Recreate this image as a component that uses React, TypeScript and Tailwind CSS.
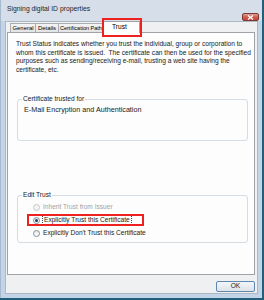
export default function App() {
  return (
    <div className="w-[264px] h-[300px] bg-[#215f7a] font-['Liberation_Sans',Arial,sans-serif] text-[6.6px] leading-[8.5px] text-black overflow-hidden">
      <div className="w-[262px] h-[298px] flex flex-col bg-[#c4d4e8] border-l border-[#a7b9cc]">
        {/* Title bar */}
        <div className="h-[21px] flex justify-between bg-[#d6dfe9] pl-[6px] pr-[3px]">
          <span className="pt-[5px] text-[#1e1e1e] text-[6.8px]">Signing digital ID properties</span>
          <div className="self-end w-[17px] h-[8px] rounded-[2px] border border-[#7b3a34] bg-gradient-to-b from-[#e3a196] via-[#cc5b4d] to-[#c4483a] flex items-center justify-center">
            <svg width="7" height="5" viewBox="0 0 7 5">
              <path d="M1 0.5 L6 4.5 M6 0.5 L1 4.5" stroke="#fff" strokeWidth="1.3" />
            </svg>
          </div>
        </div>

        {/* Client area */}
        <div className="flex-1 flex mx-[4px] mb-[4px]">
          <div className="w-[253px] flex flex-col bg-[#eff0f1] border border-[#aeb8c3] pl-[1px] pr-[2px]">
            {/* Tabs */}
            <div className="relative h-[10px] flex items-end pl-[3px] text-[5.9px]">
              <div className="h-[9px] w-[26px] border border-b-0 border-[#a9adb1] bg-gradient-to-b from-[#f4f4f4] to-[#e2e3e4] flex items-center justify-center">General</div>
              <div className="h-[9px] w-[23px] border border-l-0 border-b-0 border-[#a9adb1] bg-gradient-to-b from-[#f4f4f4] to-[#e2e3e4] flex items-center justify-center">Details</div>
              <div className="h-[9px] w-[46px] border border-l-0 border-b-0 border-[#a9adb1] bg-gradient-to-b from-[#f4f4f4] to-[#e2e3e4] flex items-center pl-[1px] whitespace-nowrap text-[5.5px]">Certification Path</div>
              <div className="relative z-10 -ml-[2px] -mb-[1px] h-[12px] w-[37px] border border-b-0 border-[#a0a4a8] bg-[#fcfdfc] flex items-start pl-[8px] pt-[1px] text-[6.6px]">Trust</div>
              {/* red highlight annotation */}
              <div className="absolute left-[95px] top-[-4px] w-[40px] h-[19px] border-2 border-[#ee2020] z-20" />
            </div>

            {/* Tab panel */}
            <div className="h-[243px] w-[248px] overflow-hidden flex flex-col bg-[#fcfdfc] border border-[#a0a4a8] pl-[8px] pr-[6px]">
              <div className="pt-[7px] whitespace-nowrap text-[6.6px] text-[#1a1a1a]">
                <div>Trust Status indicates whether you trust the individual, group or corporation to</div>
                <div>whom this certificate is issued.&nbsp; The certificate can then be used for the specified</div>
                <div>purposes such as sending/receiving e-mail, trusting a web site having the</div>
                <div>certificate, etc.</div>
              </div>

              <fieldset className="mt-[21px] ml-[1px] h-[46px] border border-[#d5dde3] rounded-[3px] px-[5px]">
                <legend className="px-[1px] -ml-[1px] text-[#1a1a1a]">Certificate trusted for</legend>
                <div className="pt-[2px] pl-[1px] text-[7.2px] text-[#1a1a1a]">E-Mail Encryption and Authentication</div>
              </fieldset>

              <fieldset className="mt-[50px] ml-[1px] h-[52px] border border-[#d5dde3] rounded-[3px] px-[5px]">
                <legend className="px-[1px] -ml-[1px] text-[#1a1a1a]">Edit Trust</legend>
                <div className="flex flex-col pl-[10px] pt-[1px]">
                  <div className="h-[13px] flex items-center gap-[2px] text-[#a3a3a3]">
                    <span className="w-[7px] h-[7px] rounded-full border border-[#c8c8c8] bg-[#f4f4f4]" />
                    <span className="px-[1px]">Inherit Trust from Issuer</span>
                  </div>
                  <div className="relative h-[13px] flex items-center gap-[2px] text-[#1a1a1a]">
                    <span className="w-[7px] h-[7px] rounded-full border border-[#8a8f96] bg-gradient-to-b from-[#e6e8ea] to-[#ffffff] flex items-center justify-center">
                      <span className="w-[3px] h-[3px] rounded-full bg-[#1d3f66]" />
                    </span>
                    <span className="px-[1px] border border-dotted border-[#444]">Explicitly Trust this Certificate</span>
                    <div className="absolute left-[-6px] top-[0px] w-[117px] h-[12px] border-2 border-[#ee2020]" />
                  </div>
                  <div className="h-[13px] flex items-center gap-[2px] text-[#1a1a1a]">
                    <span className="w-[7px] h-[7px] rounded-full border border-[#8a8f96] bg-gradient-to-b from-[#e6e8ea] to-[#ffffff]" />
                    <span className="px-[1px]">Explicitly Don't Trust this Certificate</span>
                  </div>
                </div>
              </fieldset>
            </div>

            {/* Buttons */}
            <div className="flex justify-end mt-[6px]">
              <button className="w-[39px] h-[11px] rounded-[2px] border border-[#5f88b0] bg-gradient-to-b from-[#f3f6f9] to-[#dde3e9] text-[6.6px] leading-none text-[#1a1a1a]">
                OK
              </button>
            </div>
          </div>
        </div>
      </div>
    </div>
  )
}
